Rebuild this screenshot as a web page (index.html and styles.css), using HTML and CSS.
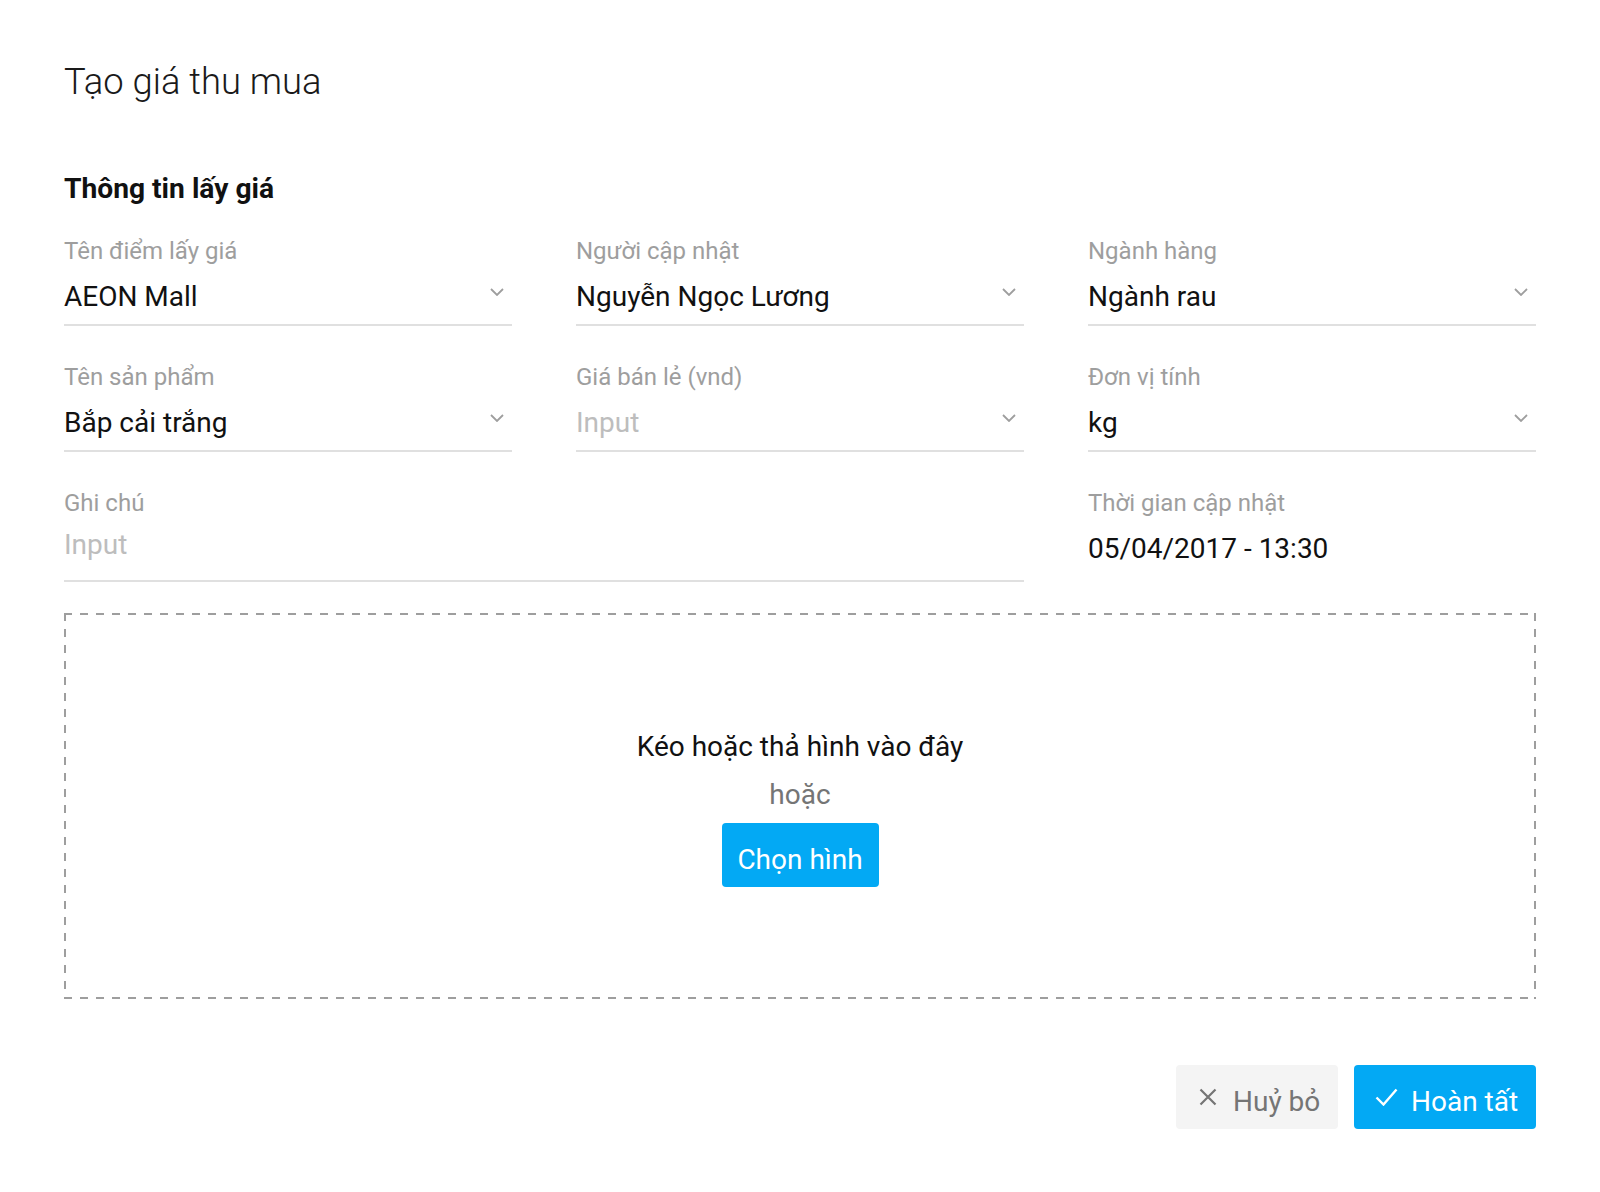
FILE: index.html
```html
<!DOCTYPE html>
<html lang="vi">
<head>
<meta charset="utf-8">
<title>Tạo giá thu mua</title>
<link rel="stylesheet" href="styles.css">
</head>
<body>
<div class="page">
  <h1 class="title">Tạo giá thu mua</h1>
  <h2 class="section-title">Thông tin lấy giá</h2>

  <div class="form">
    <div class="field">
      <div class="label">Tên điểm lấy giá</div>
      <div class="value"><span>AEON Mall</span><svg class="chev" width="14" height="8" viewBox="0 0 14 8"><path d="M1 1l6 6 6-6" fill="none" stroke="#9e9e9e" stroke-width="1.8"/></svg></div>
    </div>
    <div class="field">
      <div class="label">Người cập nhật</div>
      <div class="value"><span>Nguyễn Ngọc Lương</span><svg class="chev" width="14" height="8" viewBox="0 0 14 8"><path d="M1 1l6 6 6-6" fill="none" stroke="#9e9e9e" stroke-width="1.8"/></svg></div>
    </div>
    <div class="field">
      <div class="label">Ngành hàng</div>
      <div class="value"><span>Ngành rau</span><svg class="chev" width="14" height="8" viewBox="0 0 14 8"><path d="M1 1l6 6 6-6" fill="none" stroke="#9e9e9e" stroke-width="1.8"/></svg></div>
    </div>

    <div class="field">
      <div class="label">Tên sản phẩm</div>
      <div class="value"><span>Bắp cải trắng</span><svg class="chev" width="14" height="8" viewBox="0 0 14 8"><path d="M1 1l6 6 6-6" fill="none" stroke="#9e9e9e" stroke-width="1.8"/></svg></div>
    </div>
    <div class="field">
      <div class="label">Giá bán lẻ (vnd)</div>
      <div class="value"><span class="placeholder">Input</span><svg class="chev" width="14" height="8" viewBox="0 0 14 8"><path d="M1 1l6 6 6-6" fill="none" stroke="#9e9e9e" stroke-width="1.8"/></svg></div>
    </div>
    <div class="field">
      <div class="label">Đơn vị tính</div>
      <div class="value"><span>kg</span><svg class="chev" width="14" height="8" viewBox="0 0 14 8"><path d="M1 1l6 6 6-6" fill="none" stroke="#9e9e9e" stroke-width="1.8"/></svg></div>
    </div>

    <div class="field field-note">
      <div class="label">Ghi chú</div>
      <div class="value value-note"><span class="placeholder">Input</span></div>
    </div>
    <div class="field">
      <div class="label">Thời gian cập nhật</div>
      <div class="value value-plain"><span>05/04/2017 - 13:30</span></div>
    </div>
  </div>

  <div class="dropzone">
    <div class="drop-text">Kéo hoặc thả hình vào đây</div>
    <div class="drop-or">hoặc</div>
    <button class="btn btn-primary btn-pick"><span>Chọn hình</span></button>
  </div>

  <div class="actions">
    <button class="btn btn-cancel"><svg width="18" height="18" viewBox="0 0 18 18"><path d="M1.5 1.5L16.5 16.5M16.5 1.5L1.5 16.5" fill="none" stroke="#757575" stroke-width="2.2"/></svg><span>Huỷ bỏ</span></button>
    <button class="btn btn-primary btn-done"><svg width="23" height="18" viewBox="0 0 23 18"><path d="M1.5 9.5l7 7L21.5 1.5" fill="none" stroke="#ffffff" stroke-width="2.4"/></svg><span>Hoàn tất</span></button>
  </div>
</div>
</body>
</html>
```

FILE: styles.css
```css
* { box-sizing: border-box; }

html, body {
  margin: 0;
  padding: 0;
  background: #ffffff;
}

body {
  font-family: Roboto, "Noto Sans", "Liberation Sans", sans-serif;
  color: #1a1a1a;
}

.page {
  width: 1600px;
  padding: 60px 64px 62px;
}

.title {
  margin: 0;
  font-weight: 300;
  font-size: 36.4px;
  line-height: 44px;
  color: #1a1a1a;
}

.section-title {
  margin: 67px 0 0;
  font-weight: 700;
  font-size: 28.2px;
  line-height: 36px;
  color: #111;
}

.form {
  margin-top: 25px;
  display: grid;
  grid-template-columns: repeat(3, 1fr);
  column-gap: 64px;
  row-gap: 32px;
}

.field-note {
  grid-column: span 2;
}

.label {
  padding-top: 3px;
  font-size: 24px;
  line-height: 32px;
  color: #9e9e9e;
}

.value {
  margin-top: 10px;
  font-size: 28px;
  line-height: 40px;
  padding-bottom: 7px;
  border-bottom: 2px solid #e0e0e0;
  color: #111;
  display: flex;
  justify-content: space-between;
  align-items: flex-start;
}

.value-note {
  margin-top: 6px;
  padding-bottom: 15px;
}

.value-plain {
  margin-top: 10px;
  border-bottom: none;
  padding-bottom: 0;
}

.placeholder {
  color: #bdbdbd;
}

.chev {
  margin-top: 11px;
  margin-right: 8px;
  flex: none;
}

.dropzone {
  margin-top: 31px;
  height: 386px;
  padding-top: 2px;
  display: flex;
  flex-direction: column;
  align-items: center;
  justify-content: center;
  gap: 8px;
  background:
    repeating-linear-gradient(90deg, #9e9e9e 0 8px, transparent 8px 16px) left top / 100% 2px no-repeat,
    repeating-linear-gradient(90deg, #9e9e9e 0 8px, transparent 8px 16px) left bottom / 100% 2px no-repeat,
    repeating-linear-gradient(180deg, #9e9e9e 0 8px, transparent 8px 16px) left top / 2px 100% no-repeat,
    repeating-linear-gradient(180deg, #9e9e9e 0 8px, transparent 8px 16px) right top / 2px 100% no-repeat;
}

.drop-text {
  font-size: 28px;
  line-height: 40px;
  color: #111;
}

.drop-or {
  font-size: 28px;
  line-height: 40px;
  color: #757575;
}

.btn {
  font-family: Roboto, "Noto Sans", "Liberation Sans", sans-serif;
  font-size: 28px;
  line-height: 1;
  height: 64px;
  border: none;
  border-radius: 4px;
  display: inline-flex;
  align-items: center;
  white-space: nowrap;
  cursor: pointer;
}

.btn-primary {
  background: #03a9f4;
  color: #ffffff;
}

.btn-pick {
  padding: 0 16px;
  width: 157px;
  justify-content: center;
}

.actions {
  margin-top: 66px;
  display: flex;
  justify-content: flex-end;
  gap: 16px;
}

.btn-cancel {
  background: #f4f4f4;
  color: #757575;
  width: 162px;
  padding: 0 0 0 23px;
  gap: 16px;
}

.btn-done {
  width: 182px;
  padding: 0 0 0 21px;
  gap: 13px;
}

.btn span {
  padding-top: 9px;
}
```
